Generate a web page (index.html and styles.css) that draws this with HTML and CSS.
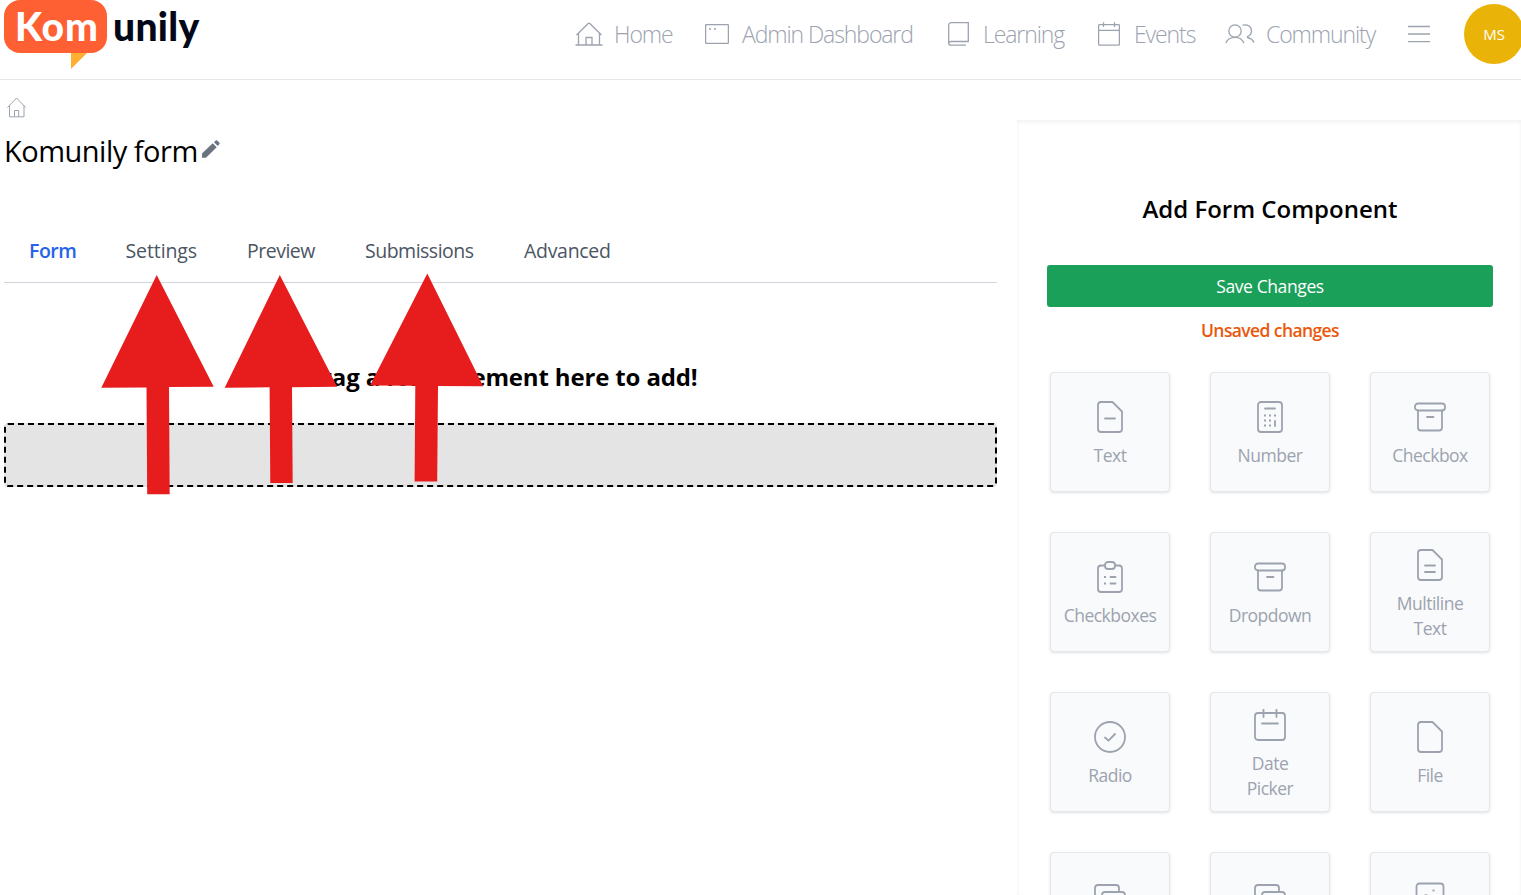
FILE: index.html
```
<!DOCTYPE html>
<html lang="en">
<head>
    <meta charset="UTF-8">
    <meta name="viewport" content="width=device-width, initial-scale=1.0">
    <title>Komunily form</title>
    <link rel="stylesheet" href="styles.css">
</head>
<body>
    <header class="header">
        <div class="logo">
            <span class="logo-bubble">Kom<svg class="logo-tail" width="16" height="17" viewBox="0 0 16 17"><path d="M0 0H16L0 16Z" fill="#ffaf32"/></svg></span>
            <span class="logo-rest">unily</span>
        </div>
        <nav class="nav">
            <a class="nav-item home">
                <svg width="28" height="24" viewBox="0 0 28 24"><path d="M.5 23H27.500M3.500 23V11M24.500 11V23M1.500 13L13.200 1.600Q14 .9 14.800 1.600L26.500 13M11 23V15.500H17V23"/></svg>
                <span>Home</span>
            </a>
            <a class="nav-item admin">
                <svg width="24" height="20" viewBox="0 0 24 20"><rect x=".6" y=".6" width="22.800" height="18.800" rx="1"/><path d="M4 5H6M9 5H11" stroke-width="1.700"/></svg>
                <span>Admin Dashboard</span>
            </a>
            <a class="nav-item learning">
                <svg width="21" height="24" viewBox="0 0 21 24"><path d="M.7 21.500V3.500Q.7 .7 3.500 .7H20.300V19.500H3Q.7 19.500 .7 21.300Q.7 23.200 3 23.200H18"/></svg>
                <span>Learning</span>
            </a>
            <a class="nav-item events">
                <svg width="22" height="24" viewBox="0 0 22 24"><rect x=".6" y="2.600" width="20.800" height="20.600" rx="1"/><path d="M.6 8.300H21.400M5.500 .3V5M16.500 .3V5"/></svg>
                <span>Events</span>
            </a>
            <a class="nav-item community">
                <svg width="30" height="20" viewBox="0 0 30 20"><circle cx="10" cy="7" r="6.200"/><path d="M.8 19Q3 13.300 10 13.300Q16.500 13.300 19 19M17.500 1.200C23 -.3 26.500 3 26.500 7C26.500 9.500 25 11.500 22.500 12.500V13.500Q27.300 14.500 29 18.500"/></svg>
                <span>Community</span>
            </a>
            <a class="nav-menu">
                <svg width="22" height="18" viewBox="0 0 22 18"><path d="M0 1.500H22M0 9H22M0 16.700H22"/></svg>
            </a>
            <div class="avatar">MS</div>
        </nav>
    </header>

    <div class="page">
        <main class="builder">
            <svg class="crumb" width="20" height="21" viewBox="0 0 20 21"><path d="M.5 10.500L9.500 1L18.700 10.500M2.500 8.500V19.800H17V8.500M7.500 19.800V13.500H11.700V19.800"/></svg>
            <div class="title-row">
                <h1>Komunily form</h1>
                <svg class="pencil" width="18" height="18" viewBox="0 0 18 18"><path d="M0 17.800V13.600L10.700 3.300L14.700 7.200L4 17.800ZM12 2.200L13.800 .6Q14.500 0 15.200 .6L17.400 2.700Q18 3.400 17.400 4L15.800 6Z"/></svg>
            </div>

            <div class="tabs">
                <a class="tab active">Form</a>
                <a class="tab tab-settings">Settings</a>
                <a class="tab tab-preview">Preview</a>
                <a class="tab tab-submissions">Submissions</a>
                <a class="tab tab-advanced">Advanced</a>
            </div>

            <h2 class="drop-title">Drag a form element here to add!</h2>
            <div class="drop-zone"></div>
        </main>

        <aside class="panel">
            <h2>Add Form Component</h2>
            <button class="save-btn">Save Changes</button>
            <p class="unsaved">Unsaved changes</p>

            <div class="components">
                <div class="card">
                    <svg viewBox="0 0 32 32"><path d="M4 4Q4 1 7 1H18.500L28 10.500V28Q28 31 25 31H7Q4 31 4 28ZM11 17.500H21"/></svg>
                    <span>Text</span>
                </div>
                <div class="card">
                    <svg viewBox="0 0 32 32"><rect x="4" y="1" width="24" height="30" rx="3"/><path d="M11 7.500H21M21 20V25"/><path class="dots" d="M10 14.500h2M15 14.500h2M20 14.500h2M10 19.500h2M15 19.500h2M10 24.500h2M15 24.500h2"/></svg>
                    <span>Number</span>
                </div>
                <div class="card">
                    <svg viewBox="0 0 32 32"><rect x="1" y="2.500" width="30" height="7" rx="3"/><path d="M4 9.500V26.500Q4 29.500 7 29.500H25Q28 29.500 28 26.500V9.500M13 16H19.500"/></svg>
                    <span>Checkbox</span>
                </div>
                <div class="card">
                    <svg viewBox="0 0 32 32"><path d="M11 4.500H7Q4 4.500 4 7.500V28Q4 31 7 31H25Q28 31 28 28V7.500Q28 4.500 25 4.500H21M16.500 16H21.500M16.500 22.500H21.500"/><rect x="11" y="1" width="10" height="7" rx="3"/><path class="dots" d="M10 16h2M10 22.500h2"/></svg>
                    <span>Checkboxes</span>
                </div>
                <div class="card">
                    <svg viewBox="0 0 32 32"><rect x="1" y="2.500" width="30" height="7" rx="3"/><path d="M4 9.500V26.500Q4 29.500 7 29.500H25Q28 29.500 28 26.500V9.500M13 16H19.500"/></svg>
                    <span>Dropdown</span>
                </div>
                <div class="card">
                    <svg viewBox="0 0 32 32"><path d="M4 4Q4 1 7 1H18.500L28 10.500V28Q28 31 25 31H7Q4 31 4 28ZM11 16.500H21M11 23H21"/></svg>
                    <span>Multiline<br>Text</span>
                </div>
                <div class="card">
                    <svg viewBox="0 0 32 32"><circle cx="16" cy="16" r="15"/><path d="M11 16.500L14.500 19.700L21 13"/></svg>
                    <span>Radio</span>
                </div>
                <div class="card">
                    <svg viewBox="0 0 32 32"><rect x="1" y="4" width="30" height="27" rx="3"/><path d="M9.500 .5V8M22.500 .5V8M8 14.500H24"/></svg>
                    <span>Date<br>Picker</span>
                </div>
                <div class="card">
                    <svg viewBox="0 0 32 32"><path d="M4 4Q4 1 7 1H18.500L28 10.500V28Q28 31 25 31H7Q4 31 4 28Z"/></svg>
                    <span>File</span>
                </div>
                <div class="card">
                    <svg viewBox="0 0 32 32"><path d="M25 10V7Q25 4 22 4H4Q1 4 1 7V22Q1 25 4 25H8"/><rect x="8" y="11" width="23" height="19" rx="3"/></svg>
                    <span></span>
                </div>
                <div class="card">
                    <svg viewBox="0 0 32 32"><path d="M25 10V7Q25 4 22 4H4Q1 4 1 7V22Q1 25 4 25H8"/><rect x="8" y="11" width="23" height="19" rx="3"/></svg>
                    <span></span>
                </div>
                <div class="card">
                    <svg viewBox="0 0 32 32"><rect x="2.500" y="2.500" width="27" height="27" rx="3"/><path d="M3 24L10 15Q12 13.500 14 15L22 28"/><path class="dots" d="M18.500 9.500h2"/></svg>
                    <span></span>
                </div>
            </div>
        </aside>
    </div>

    <!-- arrows pointing at the tabs -->
    <svg class="arrows" width="500" height="500" viewBox="0 0 500 500">
        <path d="M156.700 275L213.700 386.700L169 387L169.700 494.200H147.200L146.500 387.400L101.300 387.800Z"/>
        <path d="M279.800 275L337.200 386.800L292 387.200L292.700 483H270.300L269.600 387.300L224.700 387.800Z"/>
        <path d="M427.300 273.500L483.200 386.300L438 386L437.200 481.500H414.600L415.300 385.800L370 385.500Z"/>
    </svg>
</body>
</html>
```
FILE: styles.css
```
* {
    box-sizing: border-box;
}
body {
    margin: 0;
    height: 895px;
    overflow: hidden;
    position: relative;
    background: #fff;
    color: #000;
    font-family: 'Open Sans', 'Noto Sans', sans-serif;
}
h1, h2, p {
    margin: 0;
}
svg {
    display: block;
    flex-shrink: 0;
    fill: none;
    stroke: #9ca3af;
}
.header {
    height: 80px;
    border-bottom: 1px solid #e5e7eb;
    display: flex;
    justify-content: space-between;
    align-items: flex-start;
}
.logo {
    display: flex;
    margin-left: 4px;
    font-family: Lato, sans-serif;
    font-weight: 900;
    font-size: 39px;
    line-height: 53px;
}
.logo-bubble {
    position: relative;
    width: 103px;
    height: 53px;
    padding-left: 11px;
    border-radius: 16px;
    background: #ff6033;
    color: #fff;
    letter-spacing: 0.9px;
}
.logo-tail {
    position: absolute;
    left: 67px;
    top: 53px;
    stroke: none;
}
.logo-rest {
    margin-left: 6px;
    color: #020817;
    letter-spacing: 0.3px;
}
.nav {
    display: flex;
    height: 68px;
    align-items: center;
    width: 946px;
}
.nav-item {
    display: flex;
    align-items: center;
    flex-shrink: 0;
    font-size: 23px;
    letter-spacing: -1.1px;
    font-weight: 300;
    color: #9ca3af;
    white-space: nowrap;
}
.nav-item span {
    margin: -1px 0 0 11px;
}
.nav-item svg, .nav-menu svg {
    stroke-width: 1.3;
}
.home {
    width: 130px;
}
.admin {
    width: 243px;
}
.admin span {
    margin-left: 13px;
}
.learning {
    width: 150px;
}
.learning span, .events span {
    margin-left: 14px;
}
.events {
    width: 127px;
}
.community {
    width: 183px;
}
.nav-menu {
    width: 56px;
    flex-shrink: 0;
}
.avatar {
    width: 60px;
    height: 60px;
    flex-shrink: 0;
    border-radius: 50%;
    background: #eab308;
    color: #fff;
    font-size: 15px;
    line-height: 61px;
    text-align: center;
}
.page {
    display: flex;
}
.builder {
    width: 993px;
    margin-left: 4px;
    padding-top: 17px;
}
.crumb {
    margin-left: 3px;
}
.title-row {
    display: flex;
    height: 66px;
    align-items: center;
}
.title-row h1 {
    margin-top: -2px;
    font-size: 29px;
    letter-spacing: -0.5px;
    font-weight: 400;
    white-space: nowrap;
    width: 198px;
}
.pencil {
    fill: #6b7280;
    stroke: none;
    margin-top: -4px;
}
.tabs {
    display: flex;
    height: 64px;
    margin-top: 35px;
    padding-left: 25px;
    border-bottom: 1px solid #d1d5db;
    font-size: 19.5px;
    letter-spacing: -0.5px;
    line-height: 64px;
    color: #4b5563;
}
.tab {
    width: 96.500px;
}
.tab.active {
    font-weight: 600;
    color: #2563eb;
}
.tab-settings {
    width: 121.500px;
    letter-spacing: -0.1px;
}
.tab-preview {
    width: 118px;
}
.tab-submissions {
    width: 159px;
}
.tab-advanced {
    letter-spacing: -0.3px;
}
.drop-title {
    margin-top: 76px;
    height: 64px;
    font-size: 24px;
    letter-spacing: -0.15px;
    line-height: 36px;
    font-weight: 700;
    text-align: center;
    white-space: nowrap;
}
.drop-zone {
    height: 64px;
    background: #e4e4e4;
    border: 2px dashed #000;
    border-radius: 4px;
}
.panel {
    width: 504px;
    height: 775px;
    margin: 40px 0 0 20px;
    padding: 71px 28px 0 30px;
    overflow: hidden;
    box-shadow: inset 0 2px 4px rgba(0, 0, 0, 0.06);
    text-align: center;
}
.panel h2 {
    font-size: 24px;
    line-height: 36px;
    font-weight: 600;
}
.save-btn {
    display: block;
    width: 100%;
    height: 42px;
    margin-top: 38px;
    border: none;
    border-radius: 3px;
    background: #1aa059;
    color: #fff;
    font-family: inherit;
    font-size: 17.5px;
    letter-spacing: -0.4px;
}
.unsaved {
    margin-top: 10px;
    font-size: 17.5px;
    letter-spacing: -0.6px;
    line-height: 26px;
    font-weight: 600;
    color: #ea580c;
}
.components {
    display: grid;
    grid-template-columns: repeat(3, 120px);
    gap: 40px;
    margin: 29px 0 0 3px;
}
.card {
    height: 120px;
    display: flex;
    flex-direction: column;
    align-items: center;
    justify-content: center;
    padding-top: 5px;
    background: #f9fafb;
    border: 1px solid #e5e7eb;
    border-radius: 4px;
    box-shadow: 0 1px 3px rgba(0, 0, 0, 0.12);
    color: #9ca3af;
    font-size: 17.5px;
    letter-spacing: -0.5px;
    line-height: 25px;
}
.card span {
    min-height: 25px;
}
.card svg {
    width: 32px;
    height: 32px;
    margin-bottom: 10px;
    stroke-width: 1.8;
    stroke-linecap: round;
    stroke-linejoin: round;
}
.card .dots {
    stroke-linecap: butt;
}
.arrows {
    position: absolute;
    left: 0;
    top: 0;
    fill: #e71d1d;
    stroke: none;
}
```
